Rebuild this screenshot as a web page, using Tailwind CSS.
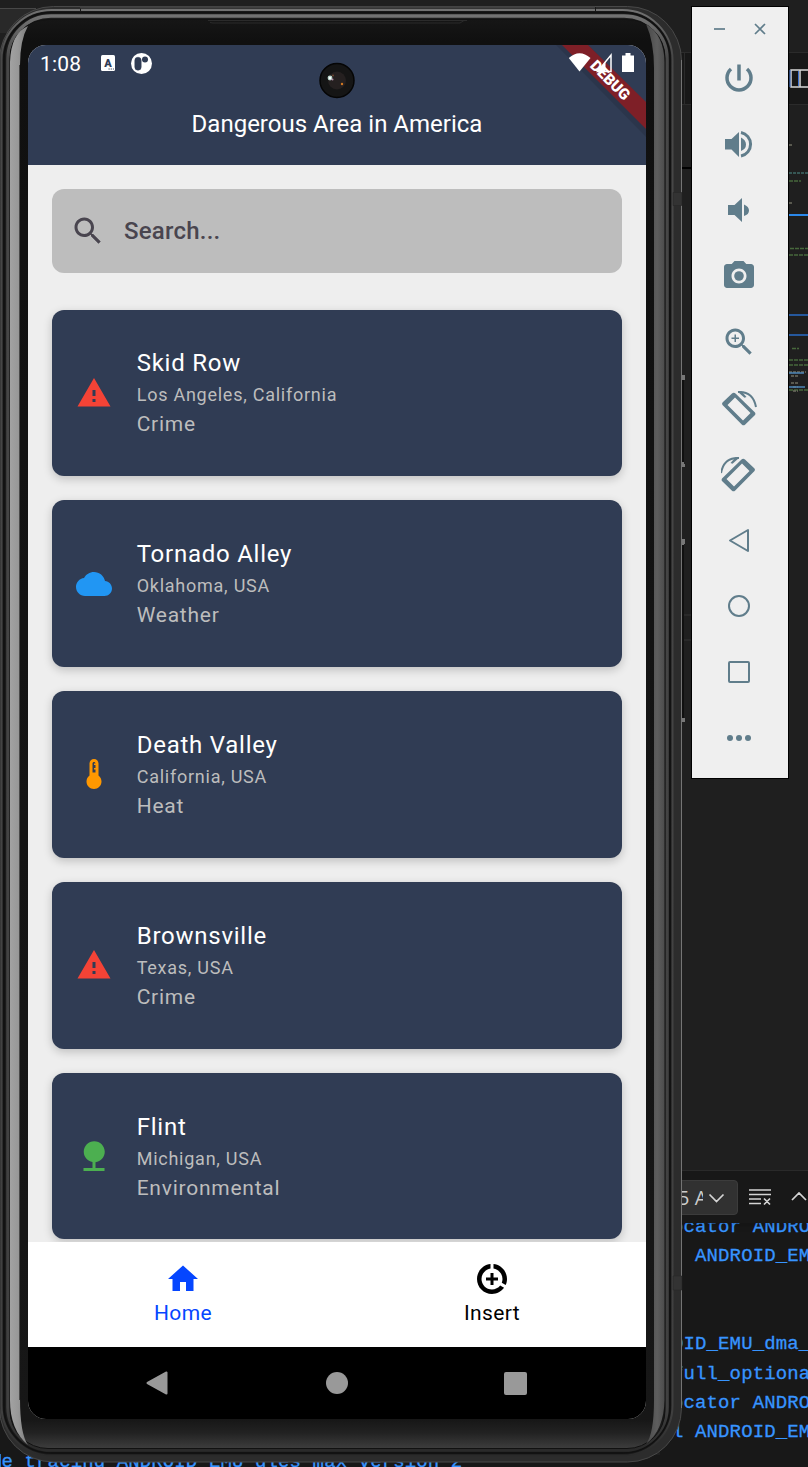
<!DOCTYPE html>
<html lang="en">
<head>
<meta charset="utf-8">
<title>Dangerous Area in America</title>
<script src="https://cdn.jsdelivr.net/npm/@tailwindcss/browser@4"></script>
</head>
<body class="bg-[#1f1f1f]">
<div class="relative w-[808px] h-[1467px] overflow-hidden bg-[#1f1f1f] font-[Roboto,sans-serif]">

  <!-- editor window behind the emulator -->
  <svg class="absolute inset-0" width="808" height="1467" viewBox="0 0 808 1467">
    <path d="M0 8h36v1H0z" fill="#484848"/>
    <path d="M0 9h36v24H0z" fill="#292929"/>
    <path d="M680 52h128v53H680z" fill="#181818"/>
    <path d="M680 52h128v1H680zM680 104h128v1H680zM684 52h1v53h-1z" fill="#2b2b2b"/>
    <path d="M680 167h12v2h-12z" fill="#000"/>
    <path d="M791 70h18v17h-18zM800 70v17" fill="#181818" stroke="#d7d7d7" stroke-width="1.5"/>
    <path d="M790 70v17M798.5 71v15" stroke="#3a6fd0" stroke-width="1"/>
    <path d="M789 214h19v2h-19z" fill="#2b88ea"/>
    <path d="M789 314h19v2h-19zM789 334h19v2h-19z" fill="#26589c"/>
    <path d="M789 173h19" stroke="#4f8f8b" stroke-dasharray="3 1"/>
    <path d="M789 181h12M790 248.500h18M789 255h19M792 348.500h7M789 360h19M789 365h19M789 390h19" stroke="#47683c" stroke-width="1.500" stroke-dasharray="4 1"/>
    <path d="M789 145h3M789 203h3M789 372h17M791 376h7M791 383h8M793 387h5M793 391h5" stroke="#6d6d60" stroke-width="1.500" stroke-dasharray="3 1"/>
    <path d="M789 373h15M789 387h16" stroke="#4e86b8" stroke-width="1.500"/>
    <path d="M680 614h12v2h-12zM680 639h12v2h-12z" fill="#292929"/>
    <path d="M660 1171h148v296H660zM0 1420h60v47H0zM0 1455h808v12H0z" fill="#181818"/>
    <path d="M660 1170h148v1H660z" fill="#2b2b2b"/>
    <path d="M0 1454h1v13H0z" fill="#2878c8"/>
  </svg>
  <div class="absolute left-[-10px] top-[1212.500px] whitespace-pre text-[19px] leading-[29.4px] tracking-[0.120px] text-[#3794ff] [-webkit-text-stroke:0.300px_#3794ff] font-['Liberation_Mono',monospace]"><div class="pl-[682px]">ocator ANDROID</div><div class="pl-[682px]">  ANDROID_EMU_</div><div> </div><div> </div><div class="pl-[682px]">OID_EMU_dma_</div><div class="pl-[682px]">full_optional</div><div class="pl-[682px]">ocator ANDROID</div><div class="pl-[682px]">l ANDROID_EMU_</div><div>de tracing ANDROID_EMU_gles_max_version_2</div></div>
  <div class="absolute left-[660px] top-[1171px] w-[148px] h-[52px] bg-[#181818] shadow-md">
    <div class="mt-[9px] w-[78px] h-[35px] rounded-sm border border-[#3c3c3c] bg-[#313131] flex items-center pl-[17px] text-[#ccc] text-[20px] font-['Open_Sans',sans-serif] whitespace-pre overflow-hidden"><span class="w-[24.5px] overflow-hidden">5 A</span></div>
  </div>
  <svg class="absolute left-[700px] top-[1180px]" width="108" height="36" fill="none" stroke="#d4d4d4" stroke-width="1.700">
    <path d="M9.500 14.500l7 7 7-7M92 20l7-7 7 7M49 10h22M49 14.500h22M49 19h12M49 23.500h12M64 18.500l6 6M70 18.500l-6 6"/>
  </svg>

  <!-- phone body -->
  <svg class="absolute inset-0" width="808" height="1467" viewBox="0 0 808 1467" fill="none">
    <defs>
      <linearGradient id="face" x1="0" y1="0" x2="0" y2="1">
        <stop offset="0" stop-color="#161616"/><stop offset="0.015" stop-color="#101010"/><stop offset="0.98" stop-color="#171717"/><stop offset="0.989" stop-color="#222"/><stop offset="1" stop-color="#3d3d3d"/>
      </linearGradient>
      <linearGradient id="lside" x1="0" y1="0" x2="1" y2="0">
        <stop offset="0" stop-color="#a2a2a2"/><stop offset="0.45" stop-color="#989898"/><stop offset="1" stop-color="#7c7c7c"/>
      </linearGradient>
      <linearGradient id="rside" x1="0" y1="0" x2="1" y2="0">
        <stop offset="0" stop-color="#484848"/><stop offset="0.6" stop-color="#5e5e5e"/><stop offset="1" stop-color="#4c4c4c"/>
      </linearGradient>
      <linearGradient id="rim" x1="0" y1="0" x2="0" y2="1">
        <stop offset="0" stop-color="#727272"/><stop offset="0.03" stop-color="#484848"/><stop offset="0.97" stop-color="#404040"/><stop offset="1" stop-color="#2a2a2a"/>
      </linearGradient>
    </defs>
    <path d="M682 375h3v5h-1v84h1v3h-3zM682 539h3v5h-1v174h1v4h-3z" fill="#777"/>
    <path d="M681 380h3v82h-3zM681 545h3v173h-3z" fill="#101010"/>
    <rect x="-.5" y="6.500" width="682" height="1455.500" rx="54" fill="#2c2c2c" stroke="#484848"/>
    <path d="M681.500 60V1408" stroke="#747474"/>
    <rect x="1.500" y="10" width="671" height="1445.500" rx="50" fill="#1b1b1b" stroke="url(#rim)" stroke-width="2"/>
    <rect x="4" y="12.500" width="666" height="1440.500" rx="47" stroke="#111" stroke-width="1.500"/>
    <rect x="8" y="16" width="659" height="1434" rx="43" stroke="url(#rim)" stroke-width="3.500"/>
    <rect x="10" y="19.500" width="655" height="1429" rx="38" fill="url(#face)" stroke="#111"/>
    <path d="M28 26Q20 40 20 65V1398Q20 1434 28 1445Q10 1430 10 1400V62Q11 33 28 26z" fill="url(#lside)"/>
    <path d="M19.500 65V1400" stroke="#4a4a4a"/>
    <path d="M646 24Q654 42 654 68V1400Q654 1434 646 1444Q664 1430 664.500 1400V62Q664 35 646 24z" fill="url(#rside)"/>
    <path d="M208 20.500h259M210 22.500l3 .5h247l4-2.500" stroke="#2b2b2b"/>
    <path d="M80.500 7v5M595.500 7v5" stroke="#181818"/>
    <path d="M80 7.500h515" stroke="#3f3f3f" stroke-width="2"/>
    <path d="M673 192.500h9v13h-9zM673 1276h9v14h-9z" fill="#333" stroke="#262626" stroke-width=".5"/>
  </svg>

  <!-- phone screen -->
  <main class="absolute left-[28px] top-[45px] w-[618px] h-[1374px] rounded-[18px] overflow-hidden bg-[#eee] flex flex-col">
    <header class="relative h-[120px] shrink-0 bg-[#303c54] text-white">
      <div class="flex h-[38px] items-center pl-[12px]">
        <span class="text-[21px] w-[61px] pt-[1.500px] tracking-[0.150px]">1:08</span>
        <svg class="mb-[2px]" width="14" height="16" viewBox="0 0 14 16"><rect width="14" height="16" rx="1.500" fill="#fff"/><text x="7" y="11.500" text-anchor="middle" class="text-[11px] font-black" fill="#303c54">A</text><path d="M7.500 14h1.200M9.700 14h1.200M11.900 14h1" stroke="#303c54"/></svg>
        <svg class="ml-[16px] mb-[2px]" width="21" height="21" viewBox="0 0 21 21"><circle cx="10.500" cy="10.500" r="10.500" fill="#fff"/><rect x="3.800" y="4.200" width="6.400" height="13" rx="3.200" fill="#303c54" stroke="#303c54" stroke-width=".5"/><circle cx="14" cy="6.500" r="3" fill="#303c54"/></svg>
      </div>
      <h1 class="mt-[25px] text-center text-[24px] leading-[32px] whitespace-nowrap">Dangerous Area in America</h1>
      <svg class="absolute left-0 top-0" width="618" height="120">
        <circle cx="309" cy="35.500" r="17" fill="#151515" stroke="#050505" stroke-width="1.500"/>
        <circle cx="309" cy="35.500" r="9" fill="#252020"/>
        <circle cx="302" cy="33" r="2.400" fill="#b9d6cc"/><circle cx="302" cy="33" r="1.200" fill="#fff"/><circle cx="304.500" cy="34.500" r="1" fill="#b28ca8"/><circle cx="305" cy="30.500" r="1" fill="#6b4730"/><circle cx="314" cy="39" r="1.200" fill="#d07822"/>
        <path d="M528 0h32l58 58v34z" fill="#000" opacity=".1"/>
        <path d="M534 0h26l58 57v27z" fill="#7e1f27"/>
        <path d="M551.500 26.500L540.800 13Q551.500 3.500 562.500 13z" fill="#fff"/>
        <path d="M583 10V26.500H569.500z" fill="none" stroke="#fff" stroke-width="1.500"/>
        <path d="M569 27L577.500 17V27z" fill="#fff"/>
        <path d="M597.500 8h5v2.500h3.500v16.500h-12V10.500h3.500z" fill="#fff"/>
        <text transform="translate(582.500 35) rotate(45)" text-anchor="middle" y="5.500" class="text-[15.300px] font-black" fill="#fff">DEBUG</text>
      </svg>
    </header>

    <section class="h-[1077px] shrink-0 overflow-hidden px-[24px] pt-[24px]">
      <div class="h-[84px] rounded-[12px] bg-[#bdbdbd] flex items-center pl-[18px] text-[#49454f]">
        <svg width="36" height="36" viewBox="0 0 24 24" fill="currentColor"><path d="M15.500 14h-.79l-.28-.27C15.410 12.590 16 11.110 16 9.500 16 5.910 13.090 3 9.500 3S3 5.910 3 9.500 5.910 16 9.500 16c1.610 0 3.090-.59 4.230-1.570l.27.28v.79l5 4.990L20.490 19l-4.990-5zm-6 0C7.010 14 5 11.990 5 9.500S7.010 5 9.500 5 14 7.010 14 9.500 11.990 14 9.500 14z"/></svg>
        <span class="ml-[18px] text-[24px] font-medium tracking-[0.220px]">Search...</span>
      </div>

      <div class="mt-[36.500px] flex flex-col gap-[24px]">
        <article class="h-[166.800px] shrink-0 rounded-[12px] bg-[#303c54] shadow-[0_3px_10px_rgba(0,0,0,0.2)] flex items-center px-[24px] gap-[24.700px]">
          <svg width="36" height="36" viewBox="0 0 24 24" fill="#f44336"><path d="M1 21h22L12 2 1 21zm12-3h-2v-2h2v2zm0-4h-2v-4h2v4z"/></svg>
          <div class="text-[#bdbdbd]"><h2 class="text-[24px] leading-[32px] tracking-[0.750px] text-white">Skid Row</h2><p class="text-[18px] leading-[32px] tracking-[0.750px]">Los Angeles, California</p><p class="text-[21px] leading-[27px] tracking-[0.750px]">Crime</p></div>
        </article>
        <article class="h-[166.800px] shrink-0 rounded-[12px] bg-[#303c54] shadow-[0_3px_10px_rgba(0,0,0,0.2)] flex items-center px-[24px] gap-[24.700px]">
          <svg width="36" height="36" viewBox="0 0 24 24" fill="#2196f3"><path d="M19.350 10.040C18.670 6.590 15.640 4 12 4 9.110 4 6.600 5.640 5.350 8.040 2.340 8.360 0 10.910 0 14c0 3.310 2.690 6 6 6h13c2.760 0 5-2.240 5-5 0-2.640-2.050-4.780-4.650-4.960z"/></svg>
          <div class="text-[#bdbdbd]"><h2 class="text-[24px] leading-[32px] tracking-[0.750px] text-white">Tornado Alley</h2><p class="text-[18px] leading-[32px] tracking-[0.750px]">Oklahoma, USA</p><p class="text-[21px] leading-[27px] tracking-[0.750px]">Weather</p></div>
        </article>
        <article class="h-[166.800px] shrink-0 rounded-[12px] bg-[#303c54] shadow-[0_3px_10px_rgba(0,0,0,0.2)] flex items-center px-[24px] gap-[24.700px]">
          <svg width="36" height="36" viewBox="0 0 24 24" fill="#ff9800"><path d="M15 13V5c0-1.660-1.340-3-3-3S9 3.340 9 5v8c-1.210.91-2 2.370-2 4 0 2.760 2.240 5 5 5s5-2.240 5-5c0-1.630-.79-3.090-2-4zm-4-8c0-.55.45-1 1-1s1 .45 1 1h-1v1h1v2h-1v1h1v2h-2V5z"/></svg>
          <div class="text-[#bdbdbd]"><h2 class="text-[24px] leading-[32px] tracking-[0.750px] text-white">Death Valley</h2><p class="text-[18px] leading-[32px] tracking-[0.750px]">California, USA</p><p class="text-[21px] leading-[27px] tracking-[0.750px]">Heat</p></div>
        </article>
        <article class="h-[166.800px] shrink-0 rounded-[12px] bg-[#303c54] shadow-[0_3px_10px_rgba(0,0,0,0.2)] flex items-center px-[24px] gap-[24.700px]">
          <svg width="36" height="36" viewBox="0 0 24 24" fill="#f44336"><path d="M1 21h22L12 2 1 21zm12-3h-2v-2h2v2zm0-4h-2v-4h2v4z"/></svg>
          <div class="text-[#bdbdbd]"><h2 class="text-[24px] leading-[32px] tracking-[0.750px] text-white">Brownsville</h2><p class="text-[18px] leading-[32px] tracking-[0.750px]">Texas, USA</p><p class="text-[21px] leading-[27px] tracking-[0.750px]">Crime</p></div>
        </article>
        <article class="h-[166.800px] shrink-0 rounded-[12px] bg-[#303c54] shadow-[0_3px_10px_rgba(0,0,0,0.2)] flex items-center px-[24px] gap-[24.700px]">
          <svg width="36" height="36" viewBox="0 0 24 24" fill="#4caf50"><path d="M13 16.120c3.470-.41 6.170-3.360 6.170-6.950 0-3.870-3.130-7-7-7s-7 3.130-7 7c0 3.470 2.520 6.340 5.830 6.890V20H5v2h14v-2h-6v-3.880z"/></svg>
          <div class="text-[#bdbdbd]"><h2 class="text-[24px] leading-[32px] tracking-[0.750px] text-white">Flint</h2><p class="text-[18px] leading-[32px] tracking-[0.750px]">Michigan, USA</p><p class="text-[21px] leading-[27px] tracking-[0.750px]">Environmental</p></div>
        </article>
      </div>
    </section>

    <nav class="h-[105px] shrink-0 bg-white grid grid-cols-2 text-[21px] leading-[32px] tracking-[0.400px]">
      <div class="flex flex-col items-center pt-[19px] text-[#0546ff]">
        <svg width="36" height="36" viewBox="0 0 24 24" fill="currentColor"><path d="M10 20v-6h4v6h5v-8h3L12 3 2 12h3v8z"/></svg>
        <span class="pl-[1px]">Home</span>
      </div>
      <div class="flex flex-col items-center pt-[19px] text-black">
        <svg width="36" height="36" viewBox="0 0 24 24" fill="currentColor"><path d="M11 8v3H8v2h3v3h2v-3h3v-2h-3V8h-2zm2-5.950v3.030c3.390.49 6 3.390 6 6.920 0 .9-.18 1.750-.48 2.540l2.600 1.530c.56-1.240.88-2.620.88-4.070 0-5.180-3.950-9.450-9-9.950zM12 19c-3.870 0-7-3.130-7-7 0-3.530 2.610-6.430 6-6.920V2.050c-5.060.5-9 4.760-9 9.950 0 5.520 4.470 10 9.990 10 3.310 0 6.240-1.610 8.060-4.090l-2.600-1.530C16.170 17.980 14.210 19 12 19z"/></svg>
        <span class="pl-[1px]">Insert</span>
      </div>
    </nav>
    <div class="h-[72px] shrink-0 bg-black flex items-center pl-[118px]">
      <svg width="22" height="24" viewBox="0 0 22 24"><path d="M20.500 1.500V22.500L1.500 12z" fill="#999" stroke="#999" stroke-width="2" stroke-linejoin="round"/></svg>
      <div class="ml-[158px] size-[22px] rounded-full bg-[#999]"></div>
      <div class="ml-[155.500px] size-[23px] rounded-[2px] bg-[#999]"></div>
    </div>
  </main>

  <!-- emulator toolbar -->
  <aside class="absolute left-[691px] top-[6px] w-[98px] h-[773px] border border-black bg-[#efefef] text-[#607d8b] flex flex-col items-center">
    <div class="h-[53px] w-full shrink-0 flex items-start pt-[16px] pl-[22px] gap-[28px]">
      <svg width="12" height="12" stroke="currentColor" stroke-width="1.700"><path d="M0 6h11"/></svg>
      <svg width="12" height="12" stroke="currentColor" stroke-width="1.700"><path d="M1 1l10 10M11 1L1 11"/></svg>
    </div>
    <div class="flex flex-col gap-[30px] mr-[2px]">
      <svg width="36" height="36" viewBox="0 0 36 36" fill="none" stroke="currentColor" stroke-width="3.500"><path d="M18 4v16M10 8.500A12 12 0 1 0 26 8.500" transform="translate(0 .5)"/></svg>
      <svg width="36" height="36" viewBox="0 0 36 36" fill="currentColor"><path d="M4 13h6.500L18 6v25l-7.500-7.500H4zM20 11.500q5 2.500 5 7t-5 6.500z"/><path d="M20 6.500a12 12 0 0 1 0 23.500" fill="none" stroke="currentColor" stroke-width="3"/></svg>
      <svg width="36" height="36" viewBox="0 0 36 36" fill="currentColor"><path d="M7 13h6.500L21 6v24l-7.500-7H7zM23 12.500q5 2 5 6t-5 5.500z"/></svg>
      <svg width="36" height="36" viewBox="0 0 24 24" fill="currentColor"><circle cx="12" cy="12" r="3.200"/><path d="M9 2L7.170 4H4c-1.100 0-2 .9-2 2v12c0 1.100.9 2 2 2h16c1.100 0 2-.9 2-2V6c0-1.100-.9-2-2-2h-3.170L15 2H9zm3 15c-2.760 0-5-2.240-5-5s2.240-5 5-5 5 2.240 5 5-2.240 5-5 5z"/></svg>
      <svg width="36" height="36" viewBox="0 0 24 24" fill="currentColor"><path d="M15.500 14h-.79l-.28-.27C15.410 12.590 16 11.110 16 9.500 16 5.910 13.090 3 9.500 3S3 5.910 3 9.500 5.910 16 9.500 16c1.610 0 3.090-.59 4.230-1.570l.27.28v.79l5 4.990L20.490 19l-4.990-5zm-6 0C7.010 14 5 11.990 5 9.500S7.010 5 9.500 5 14 7.010 14 9.500 11.990 14 9.500 14zM9 7h1v2h2v1h-2v2H9v-2H7V9h2z"/></svg>
      <svg width="36" height="36" viewBox="0 0 36 36" fill="currentColor"><path fill-rule="evenodd" d="M11.500 3.500q1.500-1.500 3 0L33.500 22q1.500 1.500 0 3L24 34q-1.500 1.500-3 0L2.500 15.500q-1.500-1.500 0-3zM14.500 7l-8 8L22 30.500l8-8z" fill="none"/><path fill-rule="evenodd" d="M11 3.500q1.800-1.500 3.500 0L34 22.500q1 1.500 0 2.500L24 34.700q-1.500 1-3 0L1.500 15q-1-1.500 0-2.500zM14 7.500L6.500 15l15.500 15.500 7.500-7.500z"/><path d="M17 2l3.500-.8L25.500 7l-2 .8z"/><path d="M17 2Q32 1 35 17" fill="none" stroke="currentColor" stroke-width="2"/></svg>
      <svg width="36" height="36" viewBox="0 0 36 36" fill="currentColor"><g transform="translate(35 0) scale(-1 1)"><path fill-rule="evenodd" d="M11 3.500q1.800-1.500 3.500 0L34 22.500q1 1.500 0 2.500L24 34.700q-1.500 1-3 0L1.500 15q-1-1.500 0-2.500zM14 7.500L6.500 15l15.500 15.500 7.500-7.500z"/><path d="M17 2l3.500-.8L25.500 7l-2 .8z"/><path d="M17 2Q32 1 35 17" fill="none" stroke="currentColor" stroke-width="2"/></g></svg>
      <svg width="36" height="36" viewBox="0 0 36 36" fill="none" stroke="currentColor" stroke-width="2" stroke-linejoin="round"><path d="M27 8v21L9 18.500z"/></svg>
      <svg width="36" height="36" viewBox="0 0 36 36" fill="none" stroke="currentColor" stroke-width="2"><circle cx="18" cy="18" r="10"/></svg>
      <svg width="36" height="36" viewBox="0 0 36 36" fill="none" stroke="currentColor" stroke-width="2"><rect x="8" y="8" width="20" height="20" rx="1"/></svg>
      <svg width="36" height="36" viewBox="0 0 36 36" fill="currentColor"><circle cx="9" cy="18" r="3"/><circle cx="18" cy="18" r="3"/><circle cx="27" cy="18" r="3"/></svg>
    </div>
  </aside>
</div>
</body>
</html>
